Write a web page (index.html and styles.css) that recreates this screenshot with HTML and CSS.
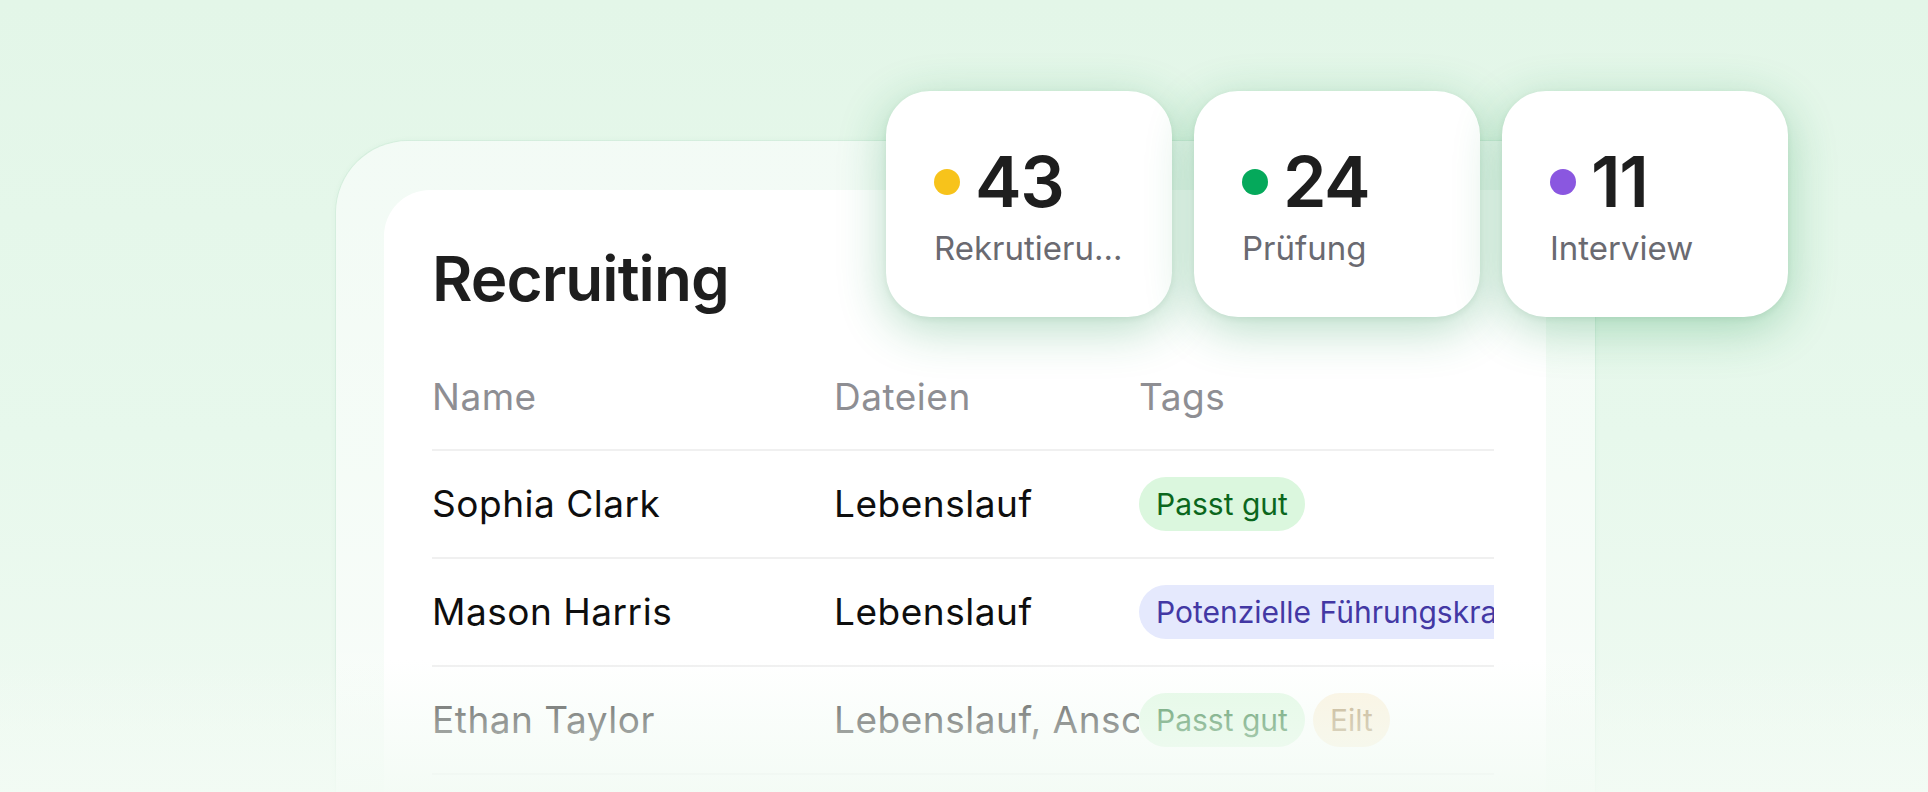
FILE: index.html
```html
<!DOCTYPE html>
<html lang="de">
<head>
<meta charset="utf-8">
<title>Recruiting</title>
<link rel="stylesheet" href="styles.css">
</head>
<body>
<div class="page">
  <div class="frame">
    <div class="card">
      <h1 class="title">Recruiting</h1>
      <div class="table">
        <div class="row head">
          <div class="cell">Name</div>
          <div class="cell">Dateien</div>
          <div class="cell">Tags</div>
        </div>
        <div class="row">
          <div class="cell name">Sophia Clark</div>
          <div class="cell files">Lebenslauf</div>
          <div class="cell tags"><span class="pill pill-green">Passt gut</span></div>
        </div>
        <div class="row">
          <div class="cell name">Mason Harris</div>
          <div class="cell files">Lebenslauf</div>
          <div class="cell tags"><span class="pill pill-indigo">Potenzielle Führungskraft</span></div>
        </div>
        <div class="row faded">
          <div class="cell name">Ethan Taylor</div>
          <div class="cell files">Lebenslauf, Anschreiben</div>
          <div class="cell tags"><span class="pill pill-green">Passt gut</span><span class="pill pill-amber">Eilt</span></div>
        </div>
      </div>
    </div>
  </div>

  <div class="stats">
    <div class="stat">
      <div class="stat-top"><span class="dot dot-yellow"></span><span class="stat-num">43</span></div>
      <div class="stat-label">Rekrutierung</div>
    </div>
    <div class="stat">
      <div class="stat-top"><span class="dot dot-green"></span><span class="stat-num">24</span></div>
      <div class="stat-label">Prüfung</div>
    </div>
    <div class="stat">
      <div class="stat-top"><span class="dot dot-purple"></span><span class="stat-num">11</span></div>
      <div class="stat-label">Interview</div>
    </div>
  </div>

  <div class="fade"></div>
</div>
</body>
</html>
```

FILE: styles.css
```css
* { box-sizing: border-box; }

html, body {
  margin: 0;
  padding: 0;
}

body {
  width: 1928px;
  height: 792px;
  overflow: hidden;
  font-family: Inter, "Noto Sans", "Liberation Sans", sans-serif;
  color: #111111;
  background: linear-gradient(180deg, #e3f6e8 0%, #e7f8ec 55%, #f0faf2 100%);
}

.page {
  position: relative;
  width: 1928px;
  height: 792px;
  overflow: hidden;
  padding: 141px 0 0 336px;
}

.frame {
  width: 1259px;
  height: 760px;
  padding: 49px 49px 0 48px;
  border-radius: 72px 72px 0 0;
  background: linear-gradient(180deg, rgba(255,255,255,0.55) 0%, rgba(255,255,255,0.6) 100%);
  box-shadow: 0 0 0 1px rgba(40,140,80,0.05), 0 0 6px rgba(40,140,80,0.06);
}

.card {
  height: 100%;
  background: #ffffff;
  border-radius: 46px 46px 0 0;
  padding: 52px 52px 0 48px;
}

.title {
  margin: 0;
  font-size: 62px;
  line-height: 74px;
  font-weight: 600;
  letter-spacing: -0.015em;
  color: #1e1e1e;
}

.table {
  margin-top: 59px;
  width: 1062px;
  overflow: hidden;
}

.row {
  display: grid;
  grid-template-columns: 402px 305px 1fr;
  height: 108px;
  align-items: center;
  border-bottom: 2px solid #f0f0f0;
}

.row.head {
  height: auto;
  align-items: start;
  padding-bottom: 30px;
}

.cell {
  font-size: 37px;
  line-height: 44px;
  letter-spacing: 0.014em;
  white-space: nowrap;
  overflow: hidden;
  color: #0e0e0e;
}

.head .cell {
  color: #8e8e93;
}

.tags {
  display: flex;
  gap: 8px;
  overflow: hidden;
  letter-spacing: 0;
}

.pill {
  display: inline-flex;
  align-items: center;
  height: 54px;
  padding: 0 17px;
  border-radius: 27px;
  font-size: 30px;
  line-height: 40px;
  white-space: nowrap;
  flex-shrink: 0;
}

.pill-green { background: #dbf7de; color: #0b671d; }
.pill-indigo { background: #e5e9fd; color: #4338a4; border-radius: 27px 0 0 27px; }
.pill-amber { background: #fbefd8; color: #a98a57; }

.faded .cell { color: #4a4a4a; }
.faded .pill { opacity: 0.75; }

.stats {
  position: absolute;
  top: 91px;
  left: 886px;
  display: flex;
  gap: 22px;
}

.stat {
  width: 286px;
  height: 226px;
  padding: 56px 48px 46px 48px;
  background: #ffffff;
  border-radius: 44px;
  display: flex;
  flex-direction: column;
  gap: 11px;
  box-shadow: 0 12px 48px rgba(30,150,80,0.32), 0 2px 6px rgba(0,70,30,0.08);
}

.stat-top {
  display: flex;
  align-items: center;
  gap: 15px;
  height: 70px;
}

.dot {
  width: 26px;
  height: 26px;
  border-radius: 50%;
  flex-shrink: 0;
}

.dot-yellow { background: #f7c31b; }
.dot-green { background: #05a95b; }
.dot-purple { background: #8a57e0; }

.stat-num {
  font-size: 70px;
  line-height: 70px;
  font-weight: 600;
  letter-spacing: -0.02em;
  color: #1e1e1e;
}

.stat-label {
  font-size: 33px;
  line-height: 40px;
  color: #6a6a71;
  white-space: nowrap;
  overflow: hidden;
  text-overflow: ellipsis;
}

.fade {
  position: absolute;
  left: 0;
  right: 0;
  bottom: 0;
  height: 132px;
  background: linear-gradient(180deg, rgba(242,251,244,0) 0%, rgba(242,251,244,0.42) 45%, rgba(242,251,244,0.88) 100%);
  pointer-events: none;
}
```
